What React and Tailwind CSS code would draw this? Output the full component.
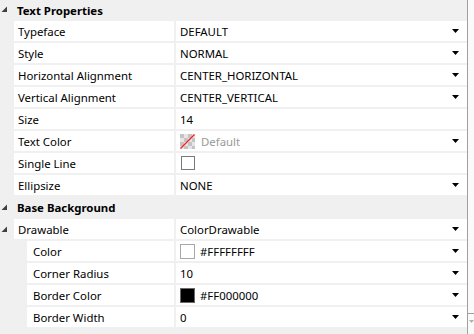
import React from 'react';

const textProps = [
  { name: 'Typeface', value: 'DEFAULT', drop: true },
  { name: 'Style', value: 'NORMAL', drop: true },
  { name: 'Horizontal Alignment', value: 'CENTER_HORIZONTAL', drop: true },
  { name: 'Vertical Alignment', value: 'CENTER_VERTICAL', drop: true },
  { name: 'Size', value: '14' },
  { name: 'Text Color', value: 'Default', kind: 'nocolor', drop: true },
  { name: 'Single Line', kind: 'check' },
  { name: 'Ellipsize', value: 'NONE', drop: true },
];

const bgProps = [
  { name: 'Color', value: '#FFFFFFFF', kind: 'white', drop: true },
  { name: 'Corner Radius', value: '10', drop: true },
  { name: 'Border Color', value: '#FF000000', kind: 'black', drop: true },
  { name: 'Border Width', value: '0', drop: true },
];

function Expander() {
  return (
    <svg width="7" height="7" viewBox="0 0 7 7" className="shrink-0">
      <polygon points="6,0.5 6,6 0.5,6" fill="#404040" />
    </svg>
  );
}

function DropArrow() {
  return (
    <svg width="7" height="4" viewBox="0 0 7 4" className="ml-auto mr-[8px] shrink-0">
      <polygon points="0,0 7,0 3.5,4" fill="#000" />
    </svg>
  );
}

function NoColor() {
  return (
    <svg width="15" height="15" viewBox="0 0 15 15" className="mr-[6px] shrink-0">
      <rect x="0" y="0" width="15" height="15" fill="#e6e6e6" />
      <rect x="0" y="0" width="4" height="4" fill="#c4c4c4" />
      <rect x="8" y="0" width="4" height="4" fill="#c4c4c4" />
      <rect x="4" y="4" width="4" height="4" fill="#c4c4c4" />
      <rect x="12" y="4" width="3" height="4" fill="#c4c4c4" />
      <rect x="0" y="8" width="4" height="4" fill="#c4c4c4" />
      <rect x="8" y="8" width="4" height="4" fill="#c4c4c4" />
      <rect x="4" y="12" width="4" height="3" fill="#c4c4c4" />
      <rect x="12" y="12" width="3" height="3" fill="#c4c4c4" />
      <line x1="0.5" y1="14.5" x2="14.5" y2="0.5" stroke="#ff1a1a" strokeWidth="1.2" />
    </svg>
  );
}

function Value({ p }) {
  return (
    <div className="flex items-center h-full bg-white pl-[4px]">
      {p.kind === 'nocolor' && <NoColor />}
      {p.kind === 'check' && (
        <div className="ml-[1px] w-[14px] h-[14px] border border-[#7a7a7a] bg-white" />
      )}
      {p.kind === 'white' && (
        <div className="mr-[5px] w-[15px] h-[15px] border border-[#a8a8a8] bg-white" />
      )}
      {p.kind === 'black' && (
        <div className="mr-[5px] w-[15px] h-[15px] border border-[#6a6a6a] bg-black" />
      )}
      {p.value && (
        <span className={`pt-[2px] ${p.kind === 'nocolor' ? 'text-[#9a9a9a]' : 'text-black'}`}>{p.value}</span>
      )}
      {p.drop && <DropArrow />}
    </div>
  );
}

function Row({ p, sub, expand }) {
  return (
    <div className="flex h-[20px] gap-[2px]">
      <div className={`flex items-center ${sub ? 'w-[25px]' : 'w-[12px]'} shrink-0 pl-[1px]`}>
        {expand && <Expander />}
      </div>
      <div className={`flex items-center bg-white ${sub ? 'w-[147px]' : 'w-[160px]'} shrink-0 ${sub ? 'pl-[6px]' : 'pl-[4px]'} text-black`}>
        <span className="pt-[2px]">{p.name}</span>
      </div>
      <div className="flex-1">
        <Value p={p} />
      </div>
    </div>
  );
}

function Header({ title, first }) {
  return (
    <div className={`flex items-center ${first ? 'h-[19px]' : 'h-[20px]'}`}>
      <div className="w-[12px] shrink-0 pl-[1px] flex items-center">
        <Expander />
      </div>
      <div className="pl-[5px] pt-[2px] font-bold text-black">{title}</div>
    </div>
  );
}

export default function App() {
  return (
    <div
      className="w-[474px] h-[334px] flex bg-[#f0f0f0] overflow-hidden text-[11.4px] leading-none"
      style={{ fontFamily: '"Noto Sans", "Segoe UI", sans-serif' }}
    >
      <div className="w-[467px] shrink-0 flex flex-col gap-[2px]">
        <Header title="Text Properties" first />
        {textProps.map((p) => (
          <Row key={p.name} p={p} />
        ))}
        <Header title="Base Background" />
        <Row p={{ name: 'Drawable', value: 'ColorDrawable', drop: true }} expand />
        {bgProps.map((p) => (
          <Row key={p.name} p={p} sub />
        ))}
      </div>
      <div className="flex-1 flex flex-col border-l border-[#a0a0a0] bg-[#fafafa]">
        <div className="flex-1" />
        <div className="h-[20px] mb-[1px] border-t border-[#a0a0a0] flex justify-center pt-[6px]">
          <svg width="5" height="3" viewBox="0 0 5 3">
            <polygon points="0,0 5,0 2.5,3" fill="#b0b0b0" />
          </svg>
        </div>
      </div>
    </div>
  );
}
